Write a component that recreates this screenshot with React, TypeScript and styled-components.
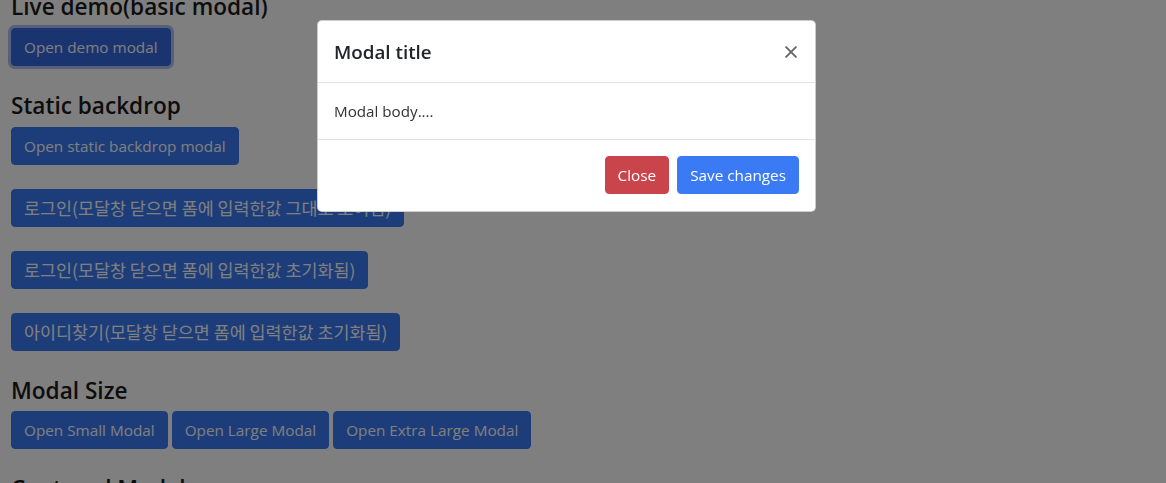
import React from "react";
import styled, { createGlobalStyle, css } from "styled-components";

const GlobalStyle = createGlobalStyle`
  html, body { margin: 0; padding: 0; background: #ffffff; overflow: hidden; }
  body {
    font-family: "Open Sans", "Noto Sans", "Noto Sans CJK KR", sans-serif;
    font-size: 15.2px;
    line-height: 1.5;
    color: #212529;
  }
  * { box-sizing: border-box; }
`;

const Page = styled.main`
  padding: 0 11px;
  margin-top: -9px;
`;

const Section = styled.section`
  margin-bottom: 24px;
`;

const Heading = styled.h4`
  margin: 0 0 4px;
  font-size: 22.6px;
  font-weight: 600;
  line-height: 32.8px;
  color: #1a1a1a;
`;

const ButtonRow = styled.div`
  display: flex;
  gap: 4px;
`;

type Variant = "primary" | "danger" | "focused";

const Button = styled.button<{ $variant?: Variant }>`
  display: inline-block;
  font-family: "Open Sans", "Noto Sans", "Noto Sans CJK KR", sans-serif;
  font-size: 15.3px;
  line-height: 24px;
  height: 38px;
  padding: 6px 12px;
  border: 1px solid transparent;
  border-radius: 4px;
  color: #ffffff;
  cursor: pointer;
  white-space: nowrap;
  ${({ $variant = "primary" }) =>
    $variant === "danger"
      ? css`
          background: #ca444b;
          border-color: #ca444b;
        `
      : $variant === "focused"
      ? css`
          background: #3468e0;
          border-color: #3468e0;
          box-shadow: 0 0 0 3px rgba(120, 150, 230, 0.6);
        `
      : css`
          background: #3a7af4;
          border-color: #3a7af4;
        `}
`;

const KoreanButton = styled(Button)`
  font-family: "Noto Sans CJK KR", "Open Sans", sans-serif;
  font-size: 17.4px;
`;

const Backdrop = styled.div`
  position: fixed;
  inset: 0;
  background: rgba(0, 0, 0, 0.5);
`;

const Dialog = styled.div`
  position: fixed;
  top: 20px;
  left: 317px;
  width: 499px;
  background: #ffffff;
  border: 1px solid rgba(0, 0, 0, 0.2);
  border-radius: 5px;
  display: flex;
  flex-direction: column;
`;

const ModalHeader = styled.header`
  display: flex;
  align-items: center;
  justify-content: space-between;
  padding: 16px 16px 15px;
  border-bottom: 1px solid #dee2e6;
`;

const ModalTitle = styled.h5`
  margin: 0;
  font-size: 18.8px;
  font-weight: 600;
  line-height: 30px;
  color: #212529;
`;

const CloseX = styled.button`
  width: 24px;
  height: 24px;
  margin-right: -4px;
  padding: 0;
  border: 0;
  background: transparent;
  display: flex;
  align-items: center;
  justify-content: center;
  color: #000;
  opacity: 0.6;
  cursor: pointer;
`;

const ModalBody = styled.div`
  padding: 16px;
  font-size: 15.2px;
  line-height: 24px;
  color: #333;
`;

const ModalFooter = styled.footer`
  display: flex;
  justify-content: flex-end;
  gap: 8px;
  padding: 16px 16px 17px;
  border-top: 1px solid #dee2e6;
`;

export default function App() {
  return (
    <>
      <GlobalStyle />
      <Page>
        <Section>
          <Heading>Live demo(basic modal)</Heading>
          <Button $variant="focused">Open demo modal</Button>
        </Section>
        <Section>
          <Heading>Static backdrop</Heading>
          <Button>Open static backdrop modal</Button>
        </Section>
        <Section>
          <KoreanButton>로그인(모달창 닫으면 폼에 입력한값 그대로 보여짐)</KoreanButton>
        </Section>
        <Section>
          <KoreanButton>로그인(모달창 닫으면 폼에 입력한값 초기화됨)</KoreanButton>
        </Section>
        <Section>
          <KoreanButton>아이디찾기(모달창 닫으면 폼에 입력한값 초기화됨)</KoreanButton>
        </Section>
        <Section>
          <Heading>Modal Size</Heading>
          <ButtonRow>
            <Button>Open Small Modal</Button>
            <Button>Open Large Modal</Button>
            <Button>Open Extra Large Modal</Button>
          </ButtonRow>
        </Section>
        <Section>
          <Heading>Centered Modal</Heading>
        </Section>
      </Page>
      <Backdrop />
      <Dialog role="dialog">
        <ModalHeader>
          <ModalTitle>Modal title</ModalTitle>
          <CloseX aria-label="Close">
            <svg width="12" height="12" viewBox="0 0 16 16" fill="none" stroke="currentColor" strokeWidth="2.6" strokeLinecap="round">
              <path d="M1.5 1.5 14.5 14.5M14.5 1.5 1.5 14.5" />
            </svg>
          </CloseX>
        </ModalHeader>
        <ModalBody>Modal body....</ModalBody>
        <ModalFooter>
          <Button $variant="danger">Close</Button>
          <Button>Save changes</Button>
        </ModalFooter>
      </Dialog>
    </>
  );
}
